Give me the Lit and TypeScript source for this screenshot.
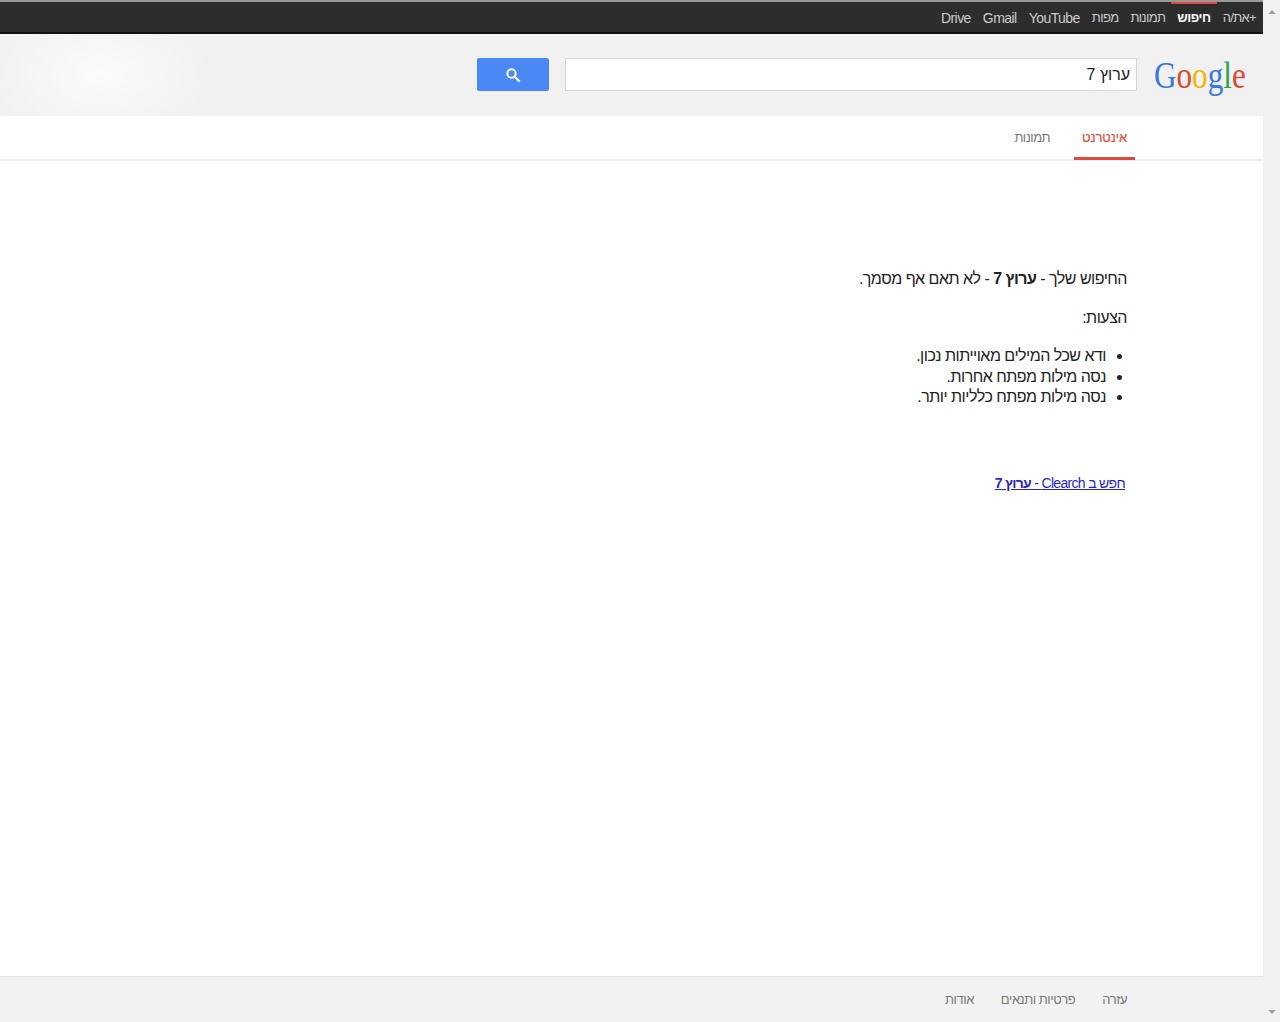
import { LitElement, html, css } from "lit";
import { customElement } from "lit/decorators.js";

@customElement("app-root")
export class AppRoot extends LitElement {
  static styles = css`
    :host { display: flex; width: 1280px; height: 1022px; overflow: hidden; font-family: "Liberation Sans", Arial, sans-serif; background: #fff; }
    .page { width: 1263px; display: flex; flex-direction: column; height: 100%; direction: rtl; }
    .scrollbar { width: 17px; height: 100%; background: #f1f1f1; display: flex; flex-direction: column; align-items: center; justify-content: space-between; padding: 10px 0 8px; box-sizing: border-box; }
    .arrow-up { width: 0; height: 0; border: 4px solid transparent; border-top: 0; border-bottom: 4px solid #a3a3a3; }
    .arrow-down { width: 0; height: 0; border: 4px solid transparent; border-bottom: 0; border-top: 4px solid #a3a3a3; }

    .bar { height: 34px; box-sizing: border-box; background: #2d2d2d; border-top: 2px solid #999; border-bottom: 2px solid #111; display: flex; align-items: center; gap: 12px; padding: 2px 7px 0 0; font-size: 13px; letter-spacing: -0.65px; color: #ccc; }
    .bar span { position: relative; line-height: 28px; }
    .bar .latin { font-size: 14px; letter-spacing: -0.55px; }
    .bar .on { color: #fff; font-weight: 700; letter-spacing: -0.45px; }
    .bar .on::before { content: ""; position: absolute; top: -2px; left: -6px; right: -6px; height: 2px; background: #dd4b39; }

    .head { height: 82px; background: radial-gradient(ellipse 110px 70px at 100px 40px, #fbfbfb, #f1f1f1); display: flex; align-items: flex-start; padding-right: 18px; box-sizing: border-box; }
    .logo { width: 92px; height: 62px; box-sizing: border-box; padding-left: 1px; margin-top: 18px; font-family: "Liberation Serif", serif; font-size: 38px; line-height: 46px; direction: ltr; text-align: left; white-space: nowrap; }
    .logo div { transform: scaleX(0.82); transform-origin: left center; }
    .b { color: #3a76e0; } .r { color: #d9482f; } .y { color: #f4b400; } .g { color: #2fa04e; }
    .input { width: 572px; height: 33px; margin-top: 24px; margin-right: 16px; box-sizing: border-box; background: #fff; border: 1px solid #d6d6d6; font-size: 16px; line-height: 31px; padding-right: 6px; color: #222; }
    .btn { width: 72px; height: 33px; margin-top: 24px; margin-right: 16px; background: #4a88f5; border-radius: 2px; display: flex; align-items: center; justify-content: center; }

    .tabs { height: 45px; box-sizing: border-box; border-bottom: 2px solid #efefef; display: flex; padding-right: 128px; gap: 16px; font-size: 13px; color: #777; }
    .tab { position: relative; padding: 0 8px; line-height: 43px; letter-spacing: -0.5px; }
    .tab.on { color: #dd4b39; letter-spacing: -0.1px; -webkit-text-stroke: 0.2px #dd4b39; }
    .tab.on::after { content: ""; position: absolute; left: 0; right: 0; bottom: -1px; height: 3px; background: #e0473b; }

    .content { flex: 1; padding: 108px 136px 0 0; font-size: 16px; line-height: 20px; letter-spacing: -0.5px; color: #222; }
    .content p { margin: 0 0 19px; }
    .content p.last { margin-bottom: 18px; }
    .content ul { margin: 0; padding: 0 21px 0 0; line-height: 20.5px; }
    .link { display: block; margin: 65px 2px 0 0; font-size: 14px; line-height: 20px; letter-spacing: -0.68px; color: #2a1fc0; text-decoration: underline; }

    .foot { height: 46px; box-sizing: border-box; background: #f2f2f2; border-top: 1px solid #e4e4e4; display: flex; gap: 27px; padding: 14px 136px 0 0; font-size: 13px; line-height: 18px; letter-spacing: -0.45px; color: #777; }
  `;

  render() {
    return html`
      <div class="page">
        <div class="bar">
          <span>+את/ה</span>
          <span class="on">חיפוש</span>
          <span>תמונות</span>
          <span>מפות</span>
          <span class="latin">YouTube</span>
          <span class="latin">Gmail</span>
          <span class="latin">Drive</span>
        </div>
        <div class="head">
          <div class="logo"><div><span class="b">G</span><span class="r">o</span><span class="y">o</span><span class="b">g</span><span class="g">l</span><span class="r">e</span></div></div>
          <div class="input">ערוץ 7</div>
          <div class="btn">
            <svg width="16" height="16" viewBox="0 0 16 16" fill="none" stroke="#fff">
              <circle cx="6.5" cy="6.5" r="4.2" stroke-width="2"/>
              <path d="M9.5 9.5L14.5 14.5" stroke-width="2.4"/>
            </svg>
          </div>
        </div>
        <div class="tabs">
          <div class="tab on">אינטרנט</div>
          <div class="tab">תמונות</div>
        </div>
        <div class="content">
          <p>החיפוש שלך - <b>ערוץ 7</b> - לא תאם אף מסמך.</p>
          <p class="last">הצעות:</p>
          <ul>
            <li>ודא שכל המילים מאוייתות נכון.</li>
            <li>נסה מילות מפתח אחרות.</li>
            <li>נסה מילות מפתח כלליות יותר.</li>
          </ul>
          <a class="link">חפש ב Clearch - <b>ערוץ 7</b></a>
        </div>
        <div class="foot">
          <span>עזרה</span>
          <span>פרטיות ותנאים</span>
          <span>אודות</span>
        </div>
      </div>
      <div class="scrollbar"><div class="arrow-up"></div><div class="arrow-down"></div></div>
    `;
  }
}
